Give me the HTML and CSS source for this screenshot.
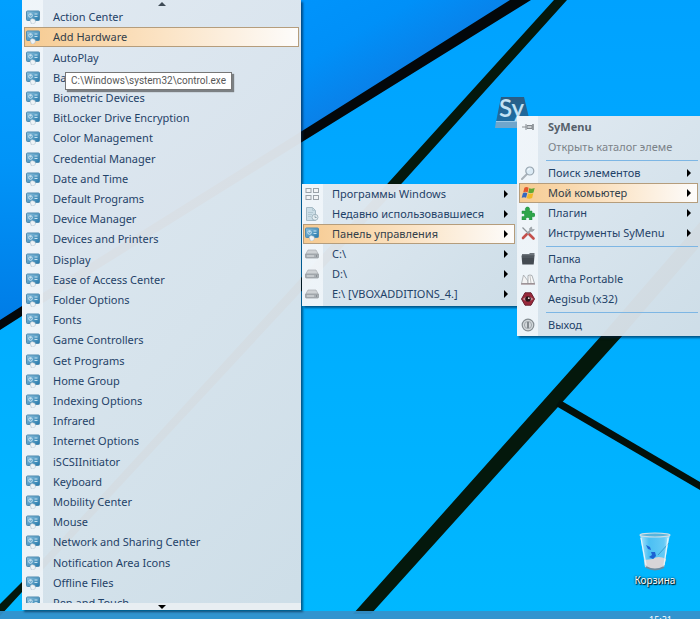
FILE: index.html
```html
<!DOCTYPE html>
<html lang="ru">
<head>
<meta charset="utf-8">
<title>SyMenu</title>
<link rel="stylesheet" href="styles.css">
</head>
<body>
<svg class="sprite" aria-hidden="true">
  <defs>
    <linearGradient id="g-screen" x1="0" y1="0" x2="1" y2="1"><stop offset="0" stop-color="#8fc3e0"/><stop offset="1" stop-color="#2478aa"/></linearGradient>
    <linearGradient id="g-key" x1="0" y1="0" x2="0" y2="1"><stop offset="0" stop-color="#2a5c84"/><stop offset="1" stop-color="#1c6fa6"/></linearGradient>
    <linearGradient id="g-bin" x1="0" y1="0" x2="1" y2="0"><stop offset="0" stop-color="#d4f0fc" stop-opacity=".85"/><stop offset=".3" stop-color="#6cc4ee" stop-opacity=".7"/><stop offset=".8" stop-color="#8fd3f2" stop-opacity=".7"/><stop offset="1" stop-color="#e2f5fd" stop-opacity=".9"/></linearGradient>
  </defs>
  <symbol id="panel" viewBox="0 0 14 14">
    <rect x=".5" y="1" width="13" height="9.500" rx="1" fill="url(#g-screen)" stroke="#4f8bb0"/>
    <circle cx="4.500" cy="5.500" r="1.800" fill="none" stroke="#d5eaf5" stroke-width=".9"/>
    <path d="M4.500 5.500V3.800" stroke="#d5eaf5" stroke-width=".8"/>
    <path d="M8.500 4h3M8.500 6.500h3" stroke="#d5eaf5" stroke-width=".9"/>
    <path d="M4 10l2-1.500 3 1 .5 2.500-2 2H5.500z" fill="#eef3f6" stroke="#9fb3c0" stroke-width=".5"/>
  </symbol>
  <symbol id="grid" viewBox="0 0 14 14">
    <g fill="#f2f4f6" stroke="#9aa2a9"><rect x="1" y="1.500" width="5" height="4"/><rect x="8.500" y="1.500" width="5" height="4"/><rect x="1" y="8.500" width="5" height="4"/><rect x="8.500" y="8.500" width="5" height="4"/></g>
  </symbol>
  <symbol id="recent" viewBox="0 0 14 14">
    <path d="M1.500.5h6l3 3v10h-9z" fill="#cbdde6" stroke="#a5bac5"/><path d="M7.500.5v3h3M3 5.500h5M3 7.500h4M3 9.500h3" fill="none" stroke="#b3c8d2"/>
    <circle cx="10" cy="10.300" r="3" fill="#e5eef2" stroke="#93a9b5" stroke-width=".8"/><path d="M10 8.500v2h1.700" fill="none" stroke="#7f97a3" stroke-width=".8"/>
  </symbol>
  <symbol id="drive" viewBox="0 0 14 14">
    <path d="M3 3h8l2.500 4.500H.5z" fill="#cdd1d4" stroke="#a9aeb2" stroke-width=".7"/><rect x=".5" y="7" width="13" height="4" rx=".7" fill="#a9afb4" stroke="#8f969b" stroke-width=".7"/><path d="M2 9h7" stroke="#dfe2e4"/><path d="M11 9h1" stroke="#6a7278"/>
  </symbol>
  <symbol id="pin" viewBox="0 0 14 14">
    <path d="M1 7h4" stroke="#8a8f93"/><path d="M5 4v6M6 5.500h5v3H6z" fill="#c9cdd0" stroke="#83898e"/><path d="M12 4v6" stroke="#83898e" stroke-width="1.600"/>
  </symbol>
  <symbol id="search" viewBox="0 0 14 14">
    <path d="M1 13l4.500-4.500" stroke="#a9b1b8" stroke-width="2" stroke-linecap="round"/><circle cx="8.800" cy="5" r="4" fill="#dcebf5" stroke="#98a5af" stroke-width="1.200"/><path d="M6.800 4.500a2 2 0 0 1 2-1.700" fill="none" stroke="#fff"/>
  </symbol>
  <symbol id="flag" viewBox="0 0 14 14">
    <path d="M3.400 1.800q2-1.500 4.200 0L6.600 6.400Q4.400 5 2.200 6.400z" fill="#e2562c"/><path d="M8.200 2.300q2.500 1 5.500-.4l-1.200 4.600q-2.500 1.300-5.300.3z" fill="#5fa834"/><path d="M1.900 7.200q2-1.400 4.400 0l-1.200 4.600q-2-1.300-4.400 0z" fill="#3468c0"/><path d="M7 7.600q2.500 1 5.300-.3l-1.200 4.600q-2.600 1.300-5.300.3z" fill="#f1b829"/>
  </symbol>
  <symbol id="plugin" viewBox="0 0 14 14">
    <path d="M1 5h3.800C4 3.800 4 1 6.500 1S9 3.800 8.300 5H11v2.500c1-.7 3-.6 3 1.500s-2 2-3 1.400V14H8.200c.6-1.500 0-2.600-1.600-2.600S4.400 12.500 5 14H1v-3.500c1.500.6 2.600 0 2.600-1.500S2.500 7 1 7.700z" fill="#2fa54a" stroke="#188a38" stroke-width=".5"/>
  </symbol>
  <symbol id="tools" viewBox="0 0 14 14">
    <path d="M1.500 1.500L9 9" stroke="#8d9499" stroke-width="1.300"/><path d="M8.500 8.500l4 4" stroke="#c4504c" stroke-width="2.600" stroke-linecap="round"/><path d="M9 5L5.500 8.500" stroke="#9aa1a6" stroke-width="2"/><path d="M5.500 8.500L2 12" stroke="#c4504c" stroke-width="2.600" stroke-linecap="round"/><path d="M10.500 1Q7.500 2 9 5q3 1.500 4.300-1.500l-2.300.2z" fill="#a5abb0" stroke="#8d9499" stroke-width=".6"/>
  </symbol>
  <symbol id="folder" viewBox="0 0 14 14">
    <path d="M1 2h7l1-1h4.500v3H1z" fill="#6d747b"/><path d="M.5 3.500h13l-.8 9H1.300z" fill="#454b52"/><path d="M1 5h12" stroke="#5d646b"/>
  </symbol>
  <symbol id="book" viewBox="0 0 14 14">
    <path d="M2.500 3L7 9v2.500H.5z" fill="#f4f4f4" stroke="#a2a6a9" stroke-width=".8"/><path d="M7 3.500q2-1 4 0l2.500 8H7z" fill="#f8f8f8" stroke="#999ea2" stroke-width=".8"/><path d="M9 4l1 7" stroke="#aaa" stroke-width=".7"/><path d="M0 12h14" stroke="#8a7276"/>
  </symbol>
  <symbol id="eye" viewBox="0 0 14 14">
    <path d="M4 .8h6L13.500 7 10 13.200H4L.5 7z" fill="#98283a" stroke="#6b2230"/><path d="M1.500 7Q7 2.500 12.500 7 7 11.500 1.500 7z" fill="#c78d94"/><circle cx="7" cy="7" r="2.800" fill="#2b1519"/><circle cx="7.800" cy="6.200" r=".9" fill="#f0dede"/>
  </symbol>
  <symbol id="power" viewBox="0 0 14 14">
    <circle cx="7" cy="7" r="5.800" fill="#d3d8db" stroke="#858d92" stroke-width="1.200"/><circle cx="7" cy="7" r="3.600" fill="none" stroke="#a2a9ae"/><path d="M7 3.900v6.200" stroke="#70777c" stroke-width="1.600"/>
  </symbol>
</svg>

<main class="desktop">
  <svg class="wallpaper" viewBox="0 0 700 619" preserveAspectRatio="xMidYMid slice" aria-hidden="true">
    <defs>
      <linearGradient id="g-sky" x1="0" y1="0" x2="0" y2="1"><stop offset="0" stop-color="#00a2ff"/><stop offset=".5" stop-color="#00adff"/><stop offset="1" stop-color="#00b8ff"/></linearGradient>
      <linearGradient id="g-top" gradientUnits="userSpaceOnUse" x1="310" y1="-10" x2="370" y2="95"><stop offset="0" stop-color="#0094fc"/><stop offset=".5" stop-color="#0090f8"/><stop offset="1" stop-color="#0a80e8"/></linearGradient>
      <linearGradient id="g-left" x1="0" y1="0" x2="0" y2="1"><stop offset="0" stop-color="#00a0ff"/><stop offset=".5" stop-color="#0094f8"/><stop offset="1" stop-color="#007ce6"/></linearGradient>
    </defs>
    <rect width="700" height="619" fill="url(#g-sky)"/>
    <path d="M0 0H520L0 325z" fill="url(#g-top)"/>
    <path d="M0 0H22V312L0 325z" fill="url(#g-left)"/>
    <path d="M510 0H531L302 142 22 316 0 330V320L22 306 302 131z" fill="#03070a"/>
    <path d="M554 0H567L403 182 22 592 0 616V604L22 582 389 182z" fill="#04180c"/>
    <path d="M700 222V246L623 335 371 614H353L602 335z" fill="#04180c"/>
    <path d="M560 400L700 482V490L556 406z" fill="#03100a"/>
  </svg>

  <a class="shortcut app" href="#symenu" aria-label="SyMenu">
    <svg viewBox="0 0 36 34" width="36" height="34"><path d="M6 1H29L35 26H1z" fill="url(#g-key)"/><path d="M1 25H35V32H0z" fill="#6fa6cc"/><path d="M1 25.500H35" stroke="#9cc8e4"/></svg>
    <span class="app-mark">Sy</span>
  </a>

  <a class="shortcut bin" href="#bin">
    <svg viewBox="0 0 34 40" width="34" height="40" aria-hidden="true">
      <path d="M2 3L7 36Q17 41 26 36L32 3z" fill="url(#g-bin)"/>
      <path d="M6 29L7 36Q17 41 26 36L28 28Q20 24 15 28z" fill="#d8d5d8"/>
      <path d="M8 36Q17 41 26 36" fill="none" stroke="#6d8ca0" stroke-width="2"/>
      <path d="M8 14l4 2 1 3-3-1zM13 21l4 0 1 4-3 3-4-2 3-2z" fill="#1d62d2"/>
      <path d="M31 12L20 24" stroke="#3a9ccc"/>
      <ellipse cx="17" cy="4" rx="15" ry="2" fill="#58b4dc" stroke="#cfdfe6" stroke-width="1.200"/>
      <path d="M3 7L8 34M30 7L26 34" stroke="#e4f6fd" stroke-width="1.200" fill="none"/>
    </svg>
    <span>Корзина</span>
  </a>

  <footer class="taskbar"><time>15:21</time></footer>

  <nav class="menu menu-control" aria-label="Панель управления">
    <button class="scroll up" aria-label="Вверх"></button>
    <ul class="items">
      <li><button class="item"><svg class="icon"><use href="#panel"/></svg>Action Center</button></li>
      <li><button class="item active"><svg class="icon"><use href="#panel"/></svg>Add Hardware</button></li>
      <li><button class="item"><svg class="icon"><use href="#panel"/></svg>AutoPlay</button></li>
      <li><button class="item"><svg class="icon"><use href="#panel"/></svg>Ba</button></li>
      <li><button class="item"><svg class="icon"><use href="#panel"/></svg>Biometric Devices</button></li>
      <li><button class="item"><svg class="icon"><use href="#panel"/></svg>BitLocker Drive Encryption</button></li>
      <li><button class="item"><svg class="icon"><use href="#panel"/></svg>Color Management</button></li>
      <li><button class="item"><svg class="icon"><use href="#panel"/></svg>Credential Manager</button></li>
      <li><button class="item"><svg class="icon"><use href="#panel"/></svg>Date and Time</button></li>
      <li><button class="item"><svg class="icon"><use href="#panel"/></svg>Default Programs</button></li>
      <li><button class="item"><svg class="icon"><use href="#panel"/></svg>Device Manager</button></li>
      <li><button class="item"><svg class="icon"><use href="#panel"/></svg>Devices and Printers</button></li>
      <li><button class="item"><svg class="icon"><use href="#panel"/></svg>Display</button></li>
      <li><button class="item"><svg class="icon"><use href="#panel"/></svg>Ease of Access Center</button></li>
      <li><button class="item"><svg class="icon"><use href="#panel"/></svg>Folder Options</button></li>
      <li><button class="item"><svg class="icon"><use href="#panel"/></svg>Fonts</button></li>
      <li><button class="item"><svg class="icon"><use href="#panel"/></svg>Game Controllers</button></li>
      <li><button class="item"><svg class="icon"><use href="#panel"/></svg>Get Programs</button></li>
      <li><button class="item"><svg class="icon"><use href="#panel"/></svg>Home Group</button></li>
      <li><button class="item"><svg class="icon"><use href="#panel"/></svg>Indexing Options</button></li>
      <li><button class="item"><svg class="icon"><use href="#panel"/></svg>Infrared</button></li>
      <li><button class="item"><svg class="icon"><use href="#panel"/></svg>Internet Options</button></li>
      <li><button class="item"><svg class="icon"><use href="#panel"/></svg>iSCSIInitiator</button></li>
      <li><button class="item"><svg class="icon"><use href="#panel"/></svg>Keyboard</button></li>
      <li><button class="item"><svg class="icon"><use href="#panel"/></svg>Mobility Center</button></li>
      <li><button class="item"><svg class="icon"><use href="#panel"/></svg>Mouse</button></li>
      <li><button class="item"><svg class="icon"><use href="#panel"/></svg>Network and Sharing Center</button></li>
      <li><button class="item"><svg class="icon"><use href="#panel"/></svg>Notification Area Icons</button></li>
      <li><button class="item"><svg class="icon"><use href="#panel"/></svg>Offline Files</button></li>
      <li class="cut"><button class="item"><svg class="icon"><use href="#panel"/></svg>Pen and Touch</button></li>
    </ul>
    <button class="scroll down" aria-label="Вниз"></button>
  </nav>

  <nav class="menu menu-computer" aria-label="Мой комьютер">
    <ul class="items">
      <li><button class="item sub"><svg class="icon"><use href="#grid"/></svg>Программы Windows</button></li>
      <li><button class="item sub"><svg class="icon"><use href="#recent"/></svg>Недавно использовавшиеся</button></li>
      <li><button class="item sub active"><svg class="icon"><use href="#panel"/></svg>Панель управления</button></li>
      <li><button class="item sub"><svg class="icon"><use href="#drive"/></svg>C:\</button></li>
      <li><button class="item sub"><svg class="icon"><use href="#drive"/></svg>D:\</button></li>
      <li><button class="item sub"><svg class="icon"><use href="#drive"/></svg>E:\ [VBOXADDITIONS_4.]</button></li>
    </ul>
  </nav>

  <nav class="menu menu-root" id="symenu" aria-label="SyMenu">
    <ul class="items">
      <li><button class="item title"><svg class="icon"><use href="#pin"/></svg>SyMenu</button></li>
      <li><button class="item muted"><svg class="icon"></svg>Открыть каталог элеме</button></li>
      <li class="line"></li>
      <li><button class="item sub"><svg class="icon"><use href="#search"/></svg>Поиск элементов</button></li>
      <li><button class="item sub active"><svg class="icon"><use href="#flag"/></svg>Мой комьютер</button></li>
      <li><button class="item sub"><svg class="icon"><use href="#plugin"/></svg>Плагин</button></li>
      <li><button class="item sub"><svg class="icon"><use href="#tools"/></svg>Инструменты SyMenu</button></li>
      <li class="line"></li>
      <li><button class="item"><svg class="icon"><use href="#folder"/></svg>Папка</button></li>
      <li><button class="item"><svg class="icon"><use href="#book"/></svg>Artha Portable</button></li>
      <li><button class="item"><svg class="icon"><use href="#eye"/></svg>Aegisub (x32)</button></li>
      <li class="line"></li>
      <li><button class="item"><svg class="icon"><use href="#power"/></svg>Выход</button></li>
    </ul>
  </nav>

  <div class="tooltip" role="tooltip">C:\Windows\system32\control.exe</div>
</main>
</body>
</html>
```
FILE: styles.css
```css
* { box-sizing: border-box; }

body {
  margin: 0;
  font: 11px/16px "Noto Sans", "Open Sans", sans-serif;
  color: #1f4268;
}

button {
  margin: 0;
  border: 0;
  background: none;
  font: inherit;
  color: inherit;
}

ul { margin: 0; padding: 0; list-style: none; }

.sprite { position: absolute; width: 0; height: 0; }

.desktop {
  position: relative;
  height: 100vh;
  overflow: hidden;
  background: #00aaff;
}

.wallpaper { position: absolute; inset: 0; width: 100%; height: 100%; }

/* Desktop shortcuts */
.shortcut {
  position: absolute;
  display: flex;
  flex-direction: column;
  align-items: center;
  text-decoration: none;
}
.app { left: 495px; top: 96px; }
.app-mark {
  position: absolute;
  top: 0;
  left: 4px;
  font: 600 24px/24px Lato, "Open Sans", sans-serif;
  color: #c3e2f4;
}
.bin {
  right: 20px;
  bottom: 31px;
  width: 50px;
  gap: 1px;
  font-size: 10px;
  color: #fff;
  text-shadow: 1px 1px 1px #000, 0 0 2px #000;
}

.taskbar {
  position: absolute;
  left: 0;
  right: 0;
  bottom: 0;
  height: 8px;
  padding: 3px 28px 0 0;
  overflow: hidden;
  background: rgba(52, 146, 204, 0.94);
  font-size: 9px;
  line-height: 12px;
  text-align: right;
  color: #fff;
}

/* Menus */
.menu {
  position: absolute;
  display: flex;
  flex-direction: column;
  background:
    linear-gradient(90deg, rgba(246, 250, 253, 0.7) 21px, transparent 21px),
    linear-gradient(135deg, rgba(232, 236, 241, 0.97), rgba(212, 223, 231, 0.97));
  box-shadow: 2px 2px 2px rgba(0, 30, 60, 0.6);
}
.menu-control { left: 22px; top: 0; bottom: 9px; width: 279px; }
.menu-computer { left: 302px; top: 184px; width: 215px; padding-bottom: 2px; }
.menu-root { left: 517px; right: 0; top: 116px; }

.item {
  display: flex;
  align-items: center;
  gap: 13px;
  width: 100%;
  height: 20px;
  padding: 0 6px 0 1px;
  border: 1px solid transparent;
  text-align: left;
  white-space: nowrap;
}
.items { padding: 0 2px 0 1px; }
.menu-root .items { padding: 1px 2px; }
.icon { flex: none; width: 14px; height: 14px; }

.active {
  border-color: #b59d7c;
  background: linear-gradient(90deg, #f6cb92, #fbe3c4 50%, #fdfcfb);
  color: #33404a;
}
.sub::after {
  content: "";
  margin-left: auto;
  border-left: 4px solid #000;
  border-top: 4px solid transparent;
  border-bottom: 4px solid transparent;
}
.title { font-weight: 700; color: #55606a; }
.muted { color: #7b8288; }
.line { display: flex; align-items: center; height: 6px; padding-left: 27px; }
.line::after { content: ""; flex: 1; height: 1px; background: #7db6e4; }

/* The long list shares the window height among its rows */
.menu-control .items {
  flex: 1;
  display: grid;
  grid-template-rows: repeat(29, minmax(0, 1fr)) 10px;
  min-height: 0;
  padding-left: 2px;
}
.menu-control .item { height: 100%; }
.menu-control .cut { overflow: hidden; }
.menu-control .cut .item { height: 20px; }

.scroll {
  display: flex;
  flex: none;
  justify-content: center;
  align-items: center;
  height: 7px;
  padding: 0;
}
.scroll::after {
  content: "";
  border-left: 4px solid transparent;
  border-right: 4px solid transparent;
}
.up::after { border-bottom: 4px solid #3e4a55; }
.down { background: #e8eef2; }
.down::after { border-top: 4px solid #000; }

.tooltip {
  position: absolute;
  left: 65px;
  top: 72px;
  padding: 0 5px;
  border: 1px solid #777;
  background: #fff;
  box-shadow: 2px 2px 1px rgba(60, 60, 60, 0.6);
  font-family: Roboto, "Noto Sans", sans-serif;
  font-size: 10px;
  color: #575757;
  white-space: nowrap;
}
```
